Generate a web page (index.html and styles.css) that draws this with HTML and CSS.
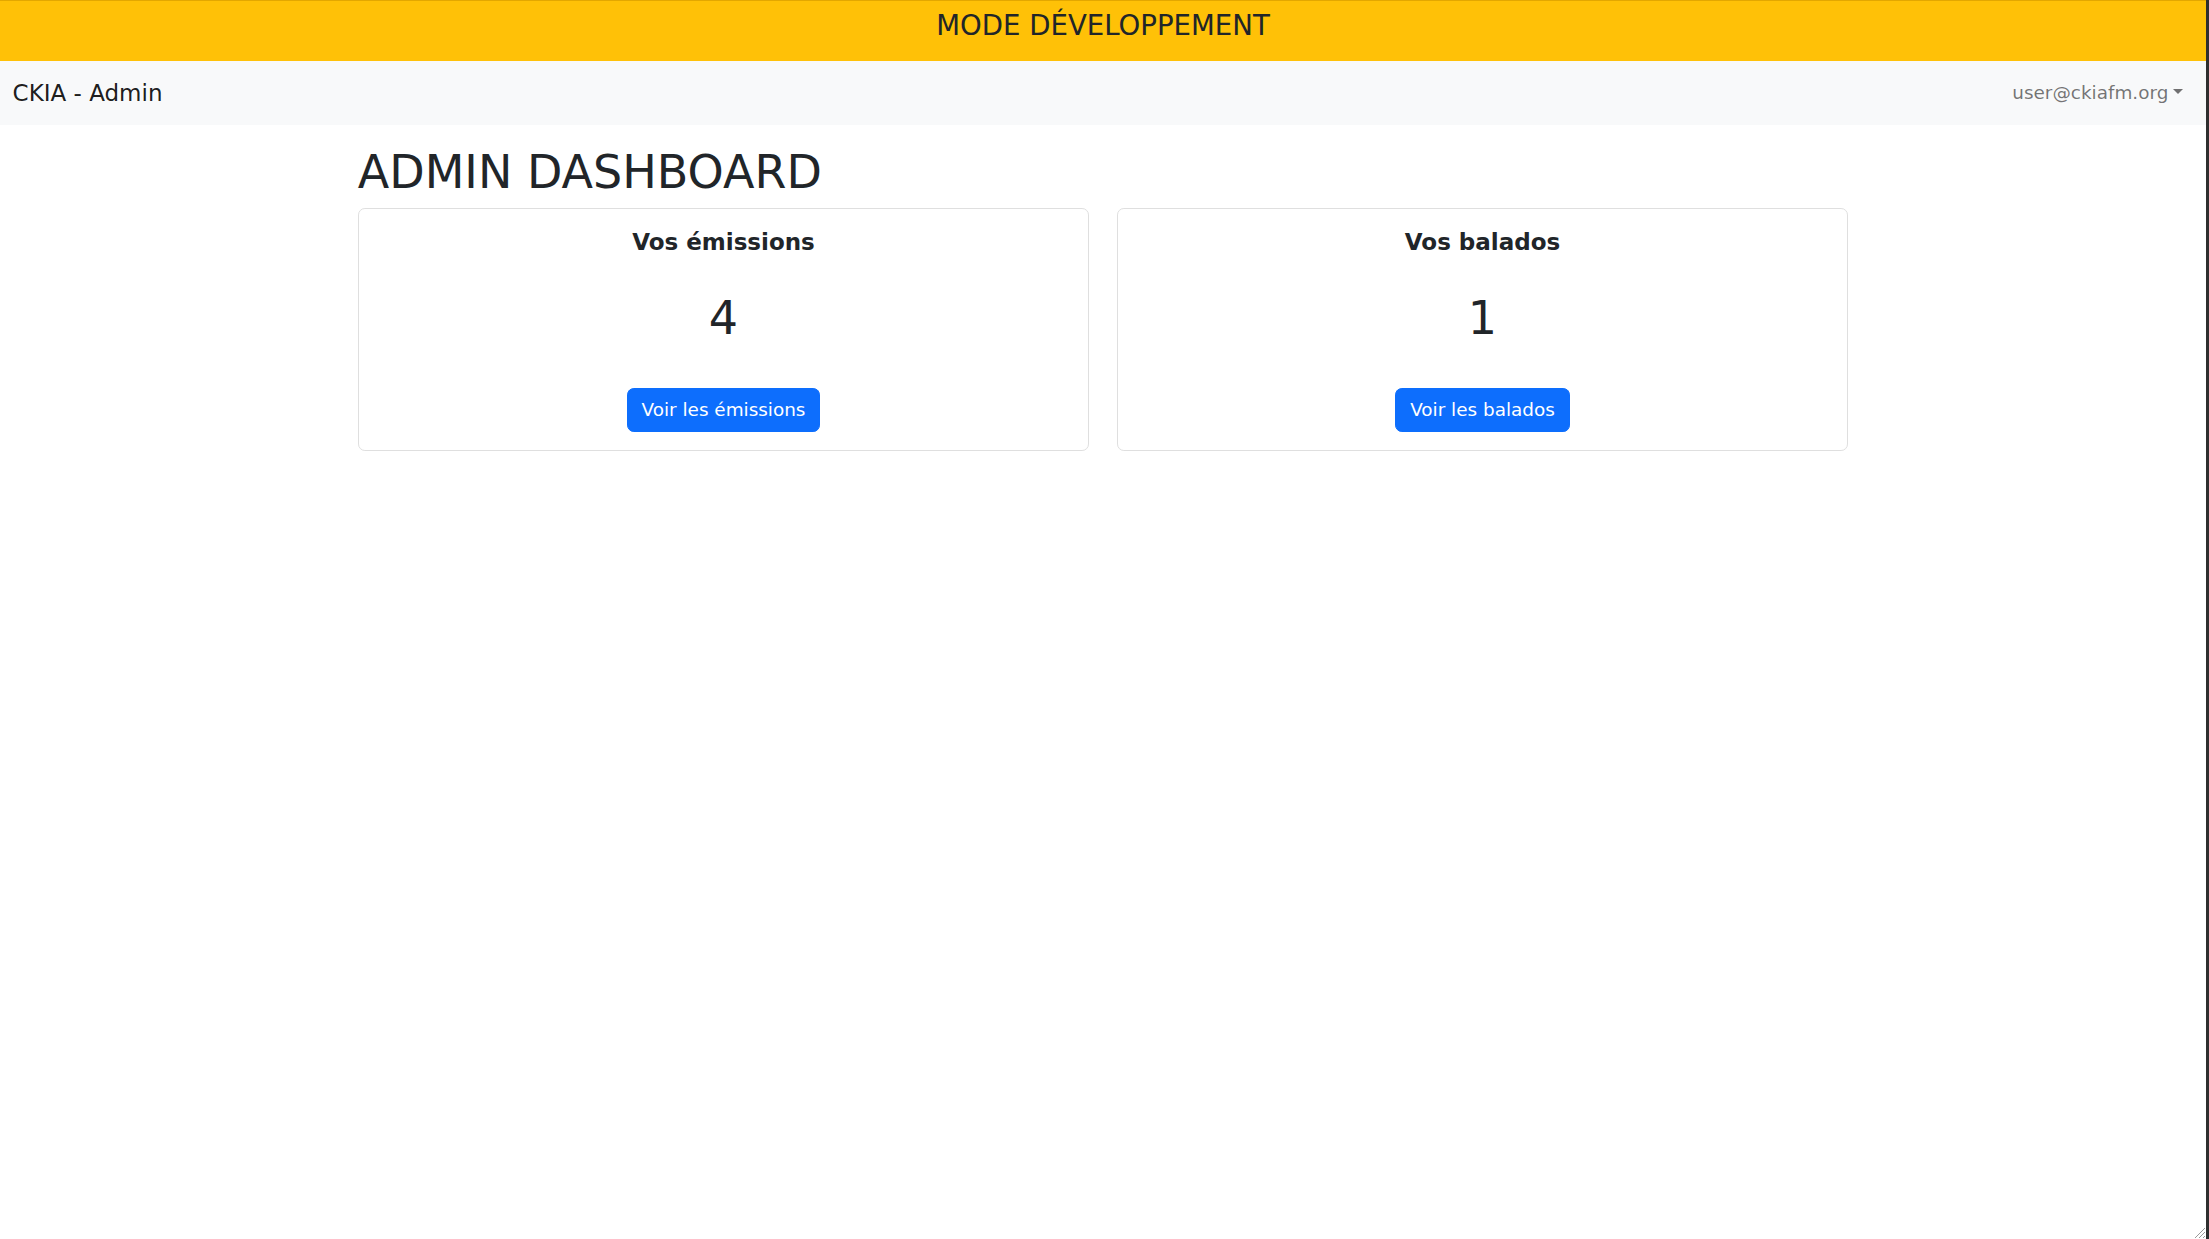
FILE: index.html
```html
<!DOCTYPE html>
<html lang="fr">
<head>
<meta charset="utf-8">
<title>CKIA - Admin</title>
<link rel="stylesheet" href="styles.css">
</head>
<body>
<div class="page">
  <div class="dev-banner">
    <h4 class="dev-title">MODE DÉVELOPPEMENT</h4>
  </div>
  <nav class="navbar">
    <a class="brand" href="#">CKIA - Admin</a>
    <a class="nav-link dropdown-toggle" href="#">user@ckiafm.org</a>
  </nav>
  <main class="container">
    <h1 class="page-title">ADMIN DASHBOARD</h1>
    <div class="cards">
      <div class="card">
        <h5 class="card-title">Vos émissions</h5>
        <p class="card-number">4</p>
        <a class="btn" href="#">Voir les émissions</a>
      </div>
      <div class="card">
        <h5 class="card-title">Vos balados</h5>
        <p class="card-number">1</p>
        <a class="btn" href="#">Voir les balados</a>
      </div>
    </div>
  </main>
  <svg class="grip" width="14" height="14" viewBox="0 0 14 14">
    <path d="M13 3 L3 13 M13 7 L7 13 M13 11 L11 13" stroke="#9a9a9a" stroke-width="1" fill="none"/>
  </svg>
</div>
</body>
</html>
```
FILE: styles.css
```css
html, body {
  margin: 0;
  padding: 0;
  background: #fff;
}
body {
  font-family: "DejaVu Sans", "Noto Sans", sans-serif;
  font-size: 18.4px;
  line-height: 1.5;
  color: #212529;
}
.page {
  min-height: 100vh;
  box-sizing: border-box;
  border-right: 3px solid #2e2e2e;
}
.dev-banner {
  background: #ffc107;
  box-shadow: inset 0 1px 0 #e3a700;
  padding: 9.2px 0;
  text-align: center;
}
.dev-title {
  margin: 0 0 9.2px 0;
  font-size: 27.6px;
  font-weight: 500;
  line-height: 1.2;
  color: #212529;
}
.navbar {
  background: #f8f9fa;
  display: flex;
  align-items: center;
  justify-content: space-between;
  padding: 9.2px 13.8px 9.2px 12.6px;
}
.brand {
  font-size: 23px;
  line-height: 1.5;
  padding: 5.75px 0;
  color: rgba(0,0,0,.9);
  text-decoration: none;
}
.nav-link {
  color: rgba(0,0,0,.55);
  text-decoration: none;
  padding: 9.2px;
  font-size: 18.4px;
}
.dropdown-toggle::after {
  content: "";
  display: inline-block;
  margin-left: .255em;
  vertical-align: .255em;
  border-top: .3em solid;
  border-right: .3em solid transparent;
  border-left: .3em solid transparent;
  border-bottom: 0;
}
.container {
  max-width: 1518px;
  margin: 0 auto;
  padding: 0 13.8px;
  box-sizing: border-box;
}
.page-title {
  margin: 20px 0 8px 0;
  font-size: 46px;
  font-weight: 500;
  line-height: 1.2;
}
.cards {
  display: grid;
  grid-template-columns: 1fr 1fr;
  gap: 27.6px;
}
.card {
  border: 1px solid #dfdfdf;
  border-radius: 6.9px;
  padding: 19.6px 18.4px 18.4px;
  text-align: center;
}
.card-title {
  margin: 0 0 9.2px 0;
  font-size: 23px;
  font-weight: 700;
  line-height: 1.2;
}
.card-number {
  margin: 27.6px 0 35.4px 0;
  font-size: 46px;
  line-height: 1.5;
}
.btn {
  display: inline-block;
  background: #0d6efd;
  border: 1.15px solid #0d6efd;
  color: #fff;
  border-radius: 6.9px;
  padding: 6.9px 13.8px;
  font-size: 18.4px;
  line-height: 1.5;
  text-decoration: none;
}
.grip {
  position: fixed;
  right: 3px;
  bottom: 0;
}
```
